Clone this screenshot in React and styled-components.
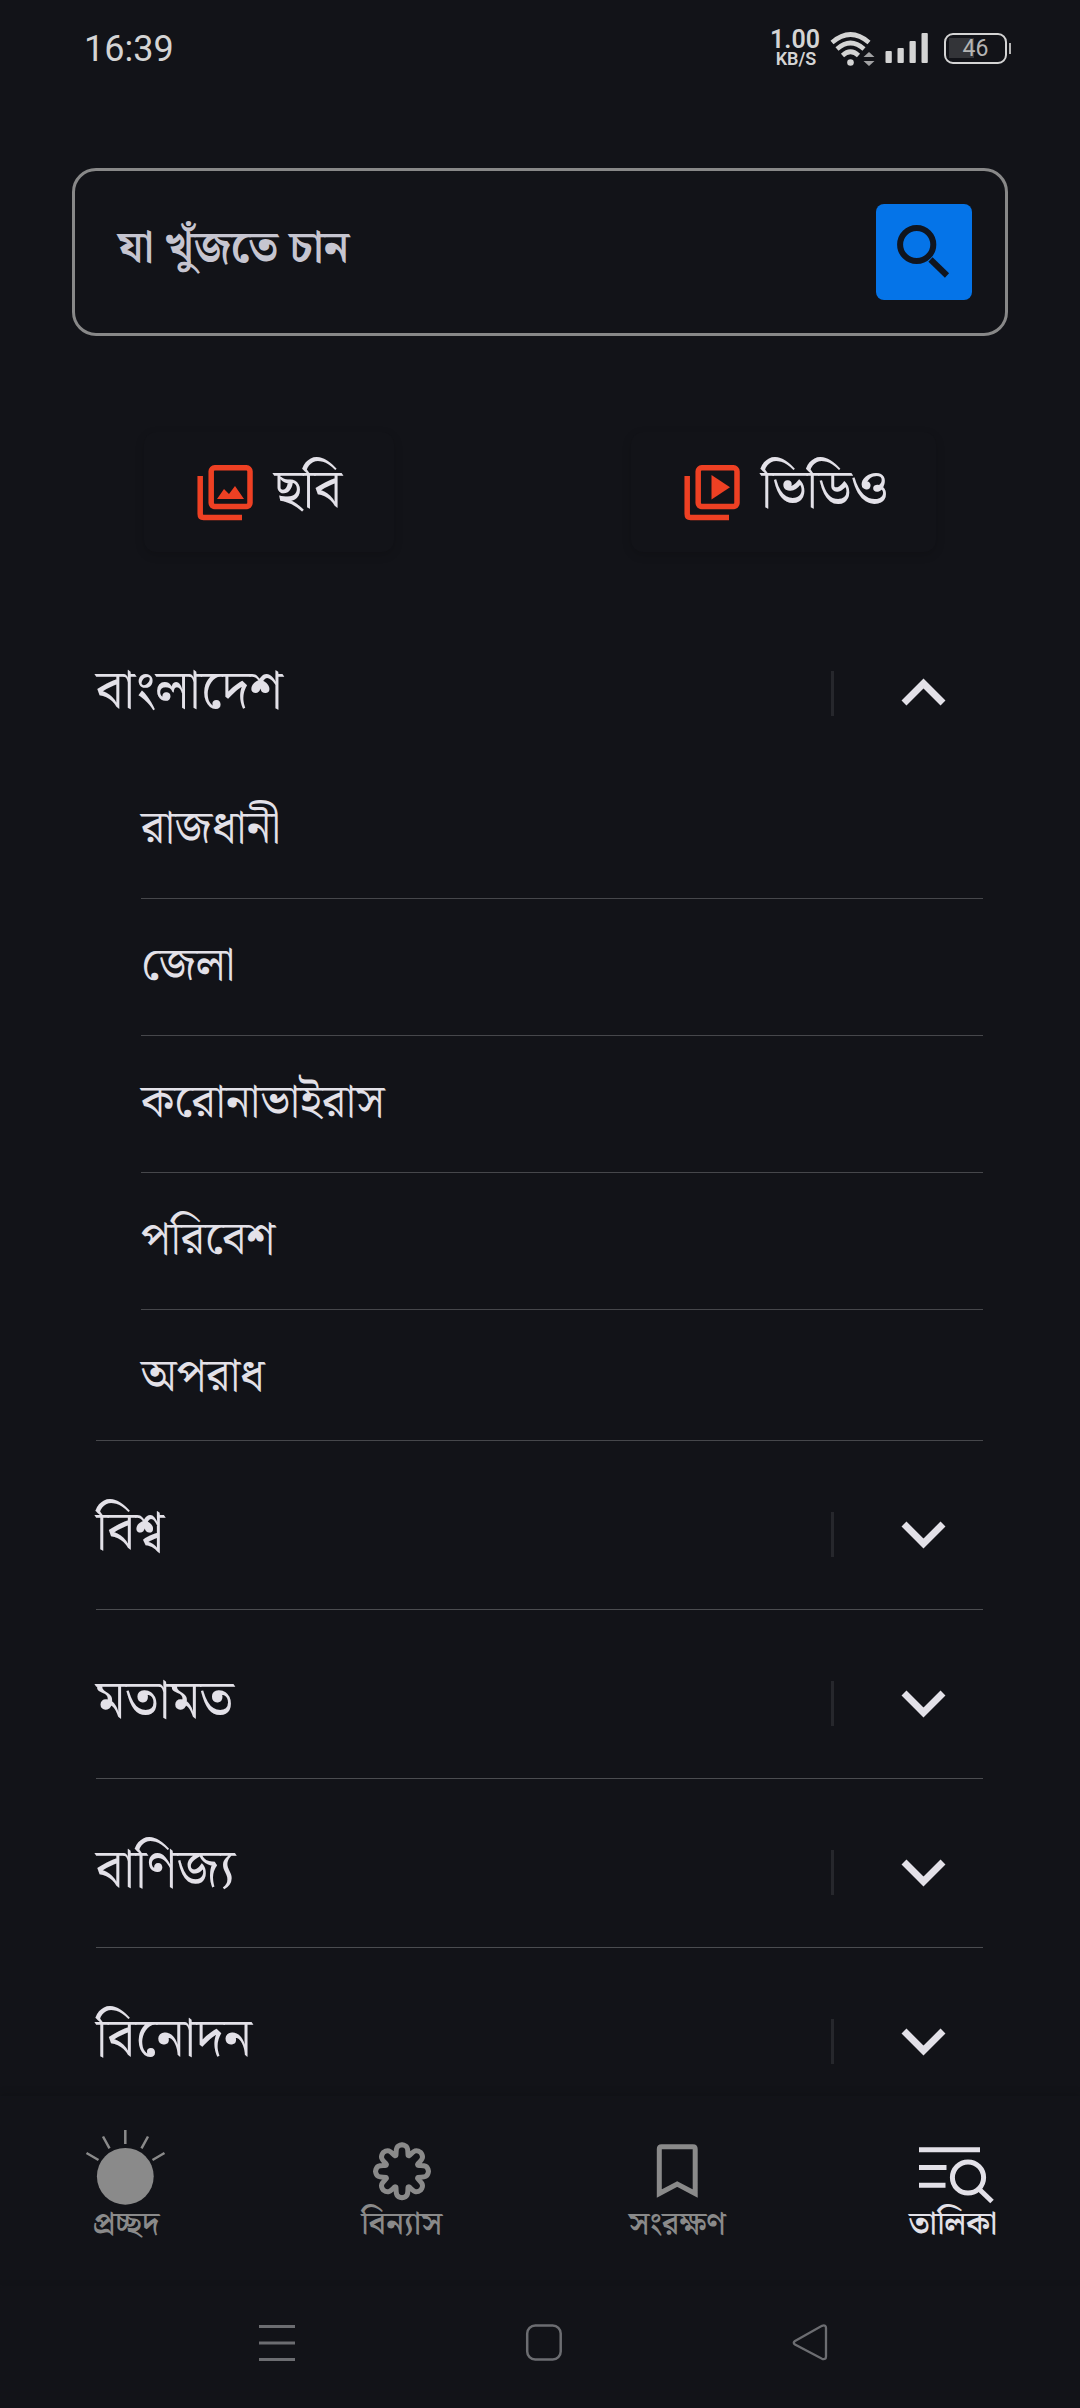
import React from "react";
import styled, { createGlobalStyle } from "styled-components";

const bengali = `"Noto Serif Bengali", "Noto Sans Bengali", "Noto Sans", "Liberation Serif", serif`;

const Global = createGlobalStyle`
  * { box-sizing: border-box; }
  body { margin: 0; background: #121318; }
`;

const Screen = styled.div`
  width: 1080px;
  height: 2408px;
  display: flex;
  flex-direction: column;
  overflow: hidden;
  background: #121318;
  color: #e3e1e8;
  font-family: ${bengali};
`;

const StatusBar = styled.header`
  height: 96px;
  flex: none;
  display: flex;
  justify-content: space-between;
  align-items: center;
  padding: 0 69px 0 84px;
  font-family: Roboto, sans-serif;
  color: #d4d4d4;
`;

const Clock = styled.span`
  font-size: 36px;
  line-height: 42px;
  padding-top: 1px;
`;

const StatusIcons = styled.div`
  display: flex;
  align-items: center;
`;

const Speed = styled.div`
  width: 50px;
  display: flex;
  flex-direction: column;
  align-items: center;
  font-weight: 600;
  margin-right: 10px;
`;

const SpeedValue = styled.span`
  font-size: 25px;
  line-height: 21px;
`;

const SpeedUnit = styled.span`
  font-size: 18px;
  line-height: 18px;
  padding-left: 2px;
`;

const Signal = styled.span`
  display: flex;
  margin: 0 15px 0 9px;
`;

const Battery = styled.div`
  width: 63px;
  height: 31px;
  border: 2.5px solid #d4d4d4;
  border-radius: 9px;
  padding: 3px;
  display: flex;
  background: linear-gradient(#333438, #333438) 3px 3px / 25px 20px no-repeat;
  align-items: center;
  justify-content: center;
  font-size: 23px;
  line-height: 23px;
  color: #b4b4b4;
`;

const BatteryTip = styled.span`
  width: 2px;
  height: 11px;
  margin-left: 2px;
  background: #b4b4b4;
`;

const SearchBox = styled.div`
  flex: none;
  height: 168px;
  margin: 72px 72px 0;
  border: 3px solid #888;
  border-radius: 24px;
  padding: 0 33px 0 43px;
  display: flex;
  align-items: center;
  justify-content: space-between;
`;

const Placeholder = styled.span`
  font-size: 44.5px;
  font-weight: 700;
  line-height: 60px;
  padding-bottom: 6px;
  color: #c6c5d0;
`;

const SearchButton = styled.button`
  width: 96px;
  height: 96px;
  border: 0;
  padding: 0;
  border-radius: 8px;
  background: #0574e8;
  display: flex;
`;

const MediaRow = styled.div`
  flex: none;
  display: flex;
  justify-content: space-between;
  height: 120px;
  margin: 96px 144px 0;
`;

const MediaCard = styled.button`
  width: ${(p) => p.$width}px;
  border: 0;
  border-radius: 12px;
  padding: 0 0 0 48px;
  display: flex;
  align-items: center;
  gap: 16px;
  background: #121318;
  box-shadow: 0 3px 10px rgba(0, 0, 0, 0.16);
  color: inherit;
  font-family: inherit;
`;

const Label = styled.span`
  font-size: ${(p) => p.$size}px;
  line-height: 60px;
  white-space: nowrap;
`;

const MediaLabel = styled(Label)`
  padding-bottom: 3px;
`;

const List = styled.main`
  flex: 1;
  min-height: 0;
  overflow: hidden;
  padding: 48px 97px 0 96px;
`;

const Section = styled.div`
  height: ${(p) => (p.$open ? 162 : 169)}px;
  border-bottom: ${(p) => (p.$open ? 0 : 1)}px solid #4b4c50;
  display: flex;
  align-items: flex-start;
  padding-top: 62px;
`;

const SectionTitle = styled(Label)`
  flex: 1;
`;

const Toggle = styled.button`
  width: 152px;
  height: 45px;
  margin-top: 9px;
  border: 0;
  border-left: 3px solid #26272c;
  background: none;
  padding: 0 0 0 67px;
  display: flex;
`;

const SubList = styled.div`
  padding-left: 45px;
`;

const SubItem = styled.div`
  height: 137px;
  border-bottom: 1px solid #46474b;
  padding: 38px 0 0;
`;

const LastItem = styled(SubItem)`
  height: 131px;
  margin-left: -45px;
  padding-left: 45px;
`;

const BottomNav = styled.nav`
  flex: none;
  height: 184px;
  padding: 28px 67px 0 66px;
  display: flex;
  justify-content: space-between;
  box-shadow: 0 -2px 8px rgba(0, 0, 0, 0.15);
`;

const NavItem = styled.div`
  width: 120px;
  display: flex;
  flex-direction: column;
  align-items: center;
  color: ${(p) => (p.$active ? "#e3e1e8" : "#8a8a8a")};
`;

const NavLabel = styled.span`
  font-size: 32.5px;
  font-weight: 600;
  line-height: 34px;
  white-space: nowrap;
`;

const SystemNav = styled.footer`
  flex: none;
  height: 128px;
  padding: 44px 251px 0 258px;
  display: flex;
  justify-content: space-between;
`;

const WifiIcon = () => (
  <svg width="46" height="36" viewBox="830 28 46 36">
    <g fill="none" stroke="#d4d4d4" strokeWidth="4.6">
      <path d="M832 40.5Q850.5 24.500 869 40.500" />
      <path d="M837 47Q850.500 35 864 47" />
      <path d="M842.500 53.500Q850.500 46 858.500 53.500" />
    </g>
    <circle cx="850.500" cy="60.500" r="3.300" fill="#d4d4d4" />
    <path d="M863.500 55L869 50L874.500 55ZM863.500 59L869 64L874.500 59Z" fill="#a2a2a4" />
  </svg>
);

const SignalIcon = () => (
  <svg width="44" height="32" viewBox="885 32 44 32" fill="#d4d4d4">
    <rect x="885.500" y="51" width="6.300" height="12" rx="1" />
    <rect x="897.500" y="48" width="6.300" height="15" rx="1" />
    <rect x="909.500" y="41" width="6.300" height="22" rx="1" />
    <rect x="921.500" y="33" width="6.300" height="30" rx="1" />
  </svg>
);

const SearchIcon = () => (
  <svg width="96" height="96" viewBox="0 0 96 96" fill="none" stroke="#10151f">
    <circle cx="40.700" cy="40.500" r="16.600" strokeWidth="6" />
    <path d="M54.500 55.500L71 71.500" strokeWidth="6" />
  </svg>
);

const MediaIcon = ({ children }) => (
  <svg width="66" height="66" viewBox="0 0 66 66" fill="none" stroke="#ee4023" strokeWidth="5.500">
    <rect x="19.200" y="8.800" width="38.800" height="38.800" rx="3.500" />
    <path d="M8.200 17V55Q8.200 58.500 11.500 58.500H50" />
    {children}
  </svg>
);

const Chevron = ({ up }) => (
  <svg width="52" height="45" viewBox="0 0 52 45" fill="none" stroke="#e3e1e8" strokeWidth="7">
    {up ? <path d="M3 32L22.500 12.500L42 32" /> : <path d="M3 12L22.500 31.500L42 12" />}
  </svg>
);

const SunIcon = () => (
  <svg width="90" height="84" viewBox="81 2124 90 84" stroke="currentColor" strokeWidth="2.500">
    <circle cx="125.300" cy="2176.300" r="28.400" fill="currentColor" stroke="none" />
    <path d="M125.300 2130V2144M103 2136.500L109.500 2148.300M148 2136.500L141.500 2148.300M86.500 2153L98.500 2160M164.500 2153L152.500 2160" />
  </svg>
);

const petals = Array.from({ length: 8 }, (_, i) => {
  const at = (deg, r) => {
    const a = ((deg + i * 45) * Math.PI) / 180;
    return `${(45 + r * Math.sin(a)).toFixed(2)} ${(47.3 - r * Math.cos(a)).toFixed(2)}`;
  };
  return `${i ? "L" : "M"}${at(-21, 17)}C${at(-15, 21)} ${at(-16, 26.5)} ${at(0, 26.5)}C${at(16, 26.5)} ${at(15, 21)} ${at(21, 17)}`;
}).join("");

const FlowerIcon = () => (
  <svg width="90" height="84" viewBox="0 0 90 84" fill="none" stroke="currentColor" strokeWidth="5" strokeLinejoin="round">
    <path d={`${petals}Z`} />
  </svg>
);

const BookmarkIcon = () => (
  <svg width="90" height="84" viewBox="0 0 90 84" fill="none" stroke="currentColor" strokeWidth="5">
    <path d="M27.300 69.500V25Q27.300 22.800 29.500 22.800H61Q63.200 22.800 63.200 25V69.500L45.200 60Z" />
  </svg>
);

const ListSearchIcon = () => (
  <svg width="90" height="84" viewBox="0 0 90 84" fill="none" stroke="currentColor" strokeWidth="5">
    <path d="M11 25.800H72M11 43.500H38.500M11 61.200H37.500" />
    <circle cx="60" cy="53.500" r="15.600" />
    <path d="M71.500 65.500L84 77.500" />
  </svg>
);

const subItems = ["রাজধানী", "জেলা", "করোনাভাইরাস", "পরিবেশ"];
const sections = ["বিশ্ব", "মতামত", "বাণিজ্য", "বিনোদন"];

const tabs = [
  { label: "প্রচ্ছদ", Icon: SunIcon },
  { label: "বিন্যাস", Icon: FlowerIcon },
  { label: "সংরক্ষণ", Icon: BookmarkIcon },
  { label: "তালিকা", Icon: ListSearchIcon, active: true },
];

export default function App() {
  return (
    <Screen>
      <Global />
      <StatusBar>
        <Clock>16:39</Clock>
        <StatusIcons>
          <Speed>
            <SpeedValue>1.00</SpeedValue>
            <SpeedUnit>KB/S</SpeedUnit>
          </Speed>
          <WifiIcon />
          <Signal>
            <SignalIcon />
          </Signal>
          <Battery>46</Battery>
          <BatteryTip />
        </StatusIcons>
      </StatusBar>
      <SearchBox>
        <Placeholder>যা খুঁজতে চান</Placeholder>
        <SearchButton>
          <SearchIcon />
        </SearchButton>
      </SearchBox>
      <MediaRow>
        <MediaCard $width={250}>
          <MediaIcon>
            <path d="M25 40L32 30L37 35L43 27L52 40Z" fill="#ee4023" stroke="none" />
          </MediaIcon>
          <MediaLabel $size={54}>ছবি</MediaLabel>
        </MediaCard>
        <MediaCard $width={305}>
          <MediaIcon>
            <path d="M32.500 16V40.500L51 28.200Z" fill="#ee4023" stroke="none" />
          </MediaIcon>
          <MediaLabel $size={54}>ভিডিও</MediaLabel>
        </MediaCard>
      </MediaRow>
      <List>
        <Section $open>
          <SectionTitle $size={54}>বাংলাদেশ</SectionTitle>
          <Toggle>
            <Chevron up />
          </Toggle>
        </Section>
        <SubList>
          {subItems.map((t) => (
            <SubItem key={t}>
              <Label $size={47}>{t}</Label>
            </SubItem>
          ))}
          <LastItem>
            <Label $size={47}>অপরাধ</Label>
          </LastItem>
        </SubList>
        {sections.map((t) => (
          <Section key={t}>
            <SectionTitle $size={54}>{t}</SectionTitle>
            <Toggle>
              <Chevron />
            </Toggle>
          </Section>
        ))}
      </List>
      <BottomNav>
        {tabs.map(({ label, Icon, active }) => (
          <NavItem key={label} $active={active}>
            <Icon />
            <NavLabel>{label}</NavLabel>
          </NavItem>
        ))}
      </BottomNav>
      <SystemNav>
        <svg width="38" height="38" viewBox="0 0 38 38" stroke="#6c6d71" strokeWidth="3">
          <path d="M1 2.500H37M1 19H37M1 35.500H37" />
        </svg>
        <svg width="38" height="38" viewBox="0 0 38 38" fill="none" stroke="#6c6d71" strokeWidth="2.500">
          <rect x="2.200" y="1.500" width="33.500" height="34" rx="8" />
        </svg>
        <svg width="38" height="38" viewBox="0 0 38 38" fill="none" stroke="#6c6d71" strokeWidth="2.300">
          <path d="M4 17L31 1.800Q35 0.500 35 4V32.500Q35 36 31 34.800L4 20.500Q1.500 18.700 4 17Z" />
        </svg>
      </SystemNav>
    </Screen>
  );
}
